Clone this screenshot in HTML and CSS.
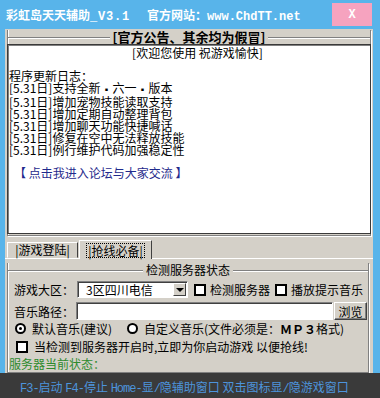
FILE: index.html
```html
<!DOCTYPE html>
<html lang="zh-CN">
<head>
    <meta charset="UTF-8">
    <title>彩虹岛天天辅助</title>
    <link rel="stylesheet" href="styles.css">
</head>
<body>
    <div class="window">
        <div class="titlebar">
            <span class="title">彩虹岛天天辅助<span class="ver">_V3.1</span></span>
            <span class="site">官方网站：<span class="url">www.ChdTT.net</span></span>
            <span class="close">X</span>
        </div>

        <div class="client">
            <div class="group notice">
                <div class="group-title"><span>[官方公告、其余均为假冒]</span></div>
                <div class="notice-box">
                    <div class="welcome">[欢迎您使用 祝游戏愉快]</div>
                    <div class="blank"></div>
                    <div>程序更新日志：</div>
                    <div>[5.31日]支持全新<span class="dot">▪</span>六一<span class="dot">▪</span>版本</div>
                    <div>[5.31日]增加宠物技能读取支持</div>
                    <div>[5.31日]增加定期自动整理背包</div>
                    <div>[5.31日]增加聊天功能快捷喊话</div>
                    <div>[5.31日]修复在空中无法释放技能</div>
                    <div>[5.31日]例行维护代码加强稳定性</div>
                    <div class="blank"></div>
                    <div class="forum">【 点击我进入论坛与大家交流 】</div>
                </div>
            </div>

            <div class="tabs">
                <span class="tab">|游戏登陆|</span>
                <span class="tab active"><span class="focus">|抢线必备|</span></span>
            </div>

            <div class="tab-panel">
                <div class="group server">
                    <div class="group-title"><span>检测服务器状态</span></div>

                    <div class="row row-zone">
                        <span class="label">游戏大区：</span>
                        <span class="select">
                            <span class="select-text">3区四川电信</span>
                            <span class="select-btn"><span class="arrow"></span></span>
                        </span>
                        <span class="check check-first"></span>
                        <span class="check-text">检测服务器</span>
                        <span class="check"></span>
                        <span class="check-text">播放提示音乐</span>
                    </div>

                    <div class="row row-path">
                        <span class="label">音乐路径：</span>
                        <span class="textbox"></span>
                        <span class="button">浏览</span>
                    </div>

                    <div class="row row-radio">
                        <span class="radio checked"></span>
                        <span class="radio-text first">默认音乐(建议)</span>
                        <span class="radio"></span>
                        <span class="radio-text">自定义音乐(文件必须是：<b>ＭＰ３</b>格式)</span>
                    </div>

                    <div class="row row-auto">
                        <span class="check"></span>
                        <span class="check-text">当检测到服务器开启时,立即为你启动游戏 以便抢线!</span>
                    </div>

                    <div class="row row-status">服务器当前状态：</div>
                </div>
            </div>
        </div>

        <div class="statusbar"><span class="en">F3-</span>启动 <span class="en">F4-</span>停止 <span class="en">Home-</span>显<span class="en">/</span>隐辅助窗口 双击图标显<span class="en">/</span>隐游戏窗口</div>
    </div>
</body>
</html>
```

FILE: styles.css
```css
body {
    margin: 0;
    font-family: "Noto Sans CJK SC", sans-serif;
    font-size: 12px;
    color: #000;
}

.window {
    width: 380px;
    height: 398px;
    background-color: #58b4ea;
    display: flex;
    flex-direction: column;
    overflow: hidden;
}

/* title bar */
.titlebar {
    height: 29px;
    display: flex;
    align-items: center;
    padding-left: 6px;
    color: #fff;
    font-weight: bold;
    font-size: 12px;
}

.ver,
.url {
    font-family: "Liberation Mono", monospace;
    font-weight: bold;
}

.ver {
    letter-spacing: 0.8px;
}

.site {
    margin-left: 17px;
}

.close {
    margin-left: auto;
    margin-right: 8px;
    width: 40px;
    height: 23px;
    background-color: #f6a3bf;
    display: flex;
    align-items: center;
    justify-content: center;
    font-family: "Liberation Mono", monospace;
    font-size: 12px;
}

/* gray client area */
.client {
    margin: 0 7px 0 5px;
    height: 344px;
    background-color: #d4d0c8;
    padding-top: 1px;
    box-sizing: border-box;
    overflow: hidden;
}

/* etched group box, the top edge is drawn by the title */
.group {
    border: 1px solid #808080;
    border-top: none;
    box-shadow: inset 1px 0 0 #fff, 1px 1px 0 #fff;
}

.group-title {
    display: flex;
    align-items: flex-end;
    height: 14px;
    line-height: 14px;
    margin: 0 -1px;
}

.group-title::before,
.group-title::after {
    content: "";
    flex: 1;
    height: 7px;
    box-sizing: border-box;
    border-top: 1px solid #808080;
    box-shadow: inset 0 1px 0 #fff;
}

.group-title::before {
    border-left: 1px solid #808080;
    box-shadow: inset 1px 1px 0 #fff;
}

.group-title::after {
    border-right: 1px solid #808080;
}

.group-title span {
    align-self: center;
    padding: 0 3px;
}

.notice {
    margin: 0 2px;
    padding-bottom: 1px;
}

.notice .group-title {
    font-size: 13px;
    font-weight: bold;
}

.notice-box {
    margin: 0 -1px;
    height: 190px;
    box-sizing: border-box;
    background-color: #fff;
    border: 1px solid #3a3a3a;
    box-shadow: inset 1px 1px 0 #808080;
    padding: 2px 0 0 1px;
    line-height: 12px;
}

.welcome {
    text-align: center;
    padding-left: 16px;
}

.blank {
    height: 11px;
}

.dot {
    display: inline-block;
    width: 12px;
    text-align: center;
    font-size: 9px;
}

.forum {
    color: #1f2a8c;
    padding-left: 5px;
}

/* tabs */
.tabs {
    display: flex;
    align-items: flex-end;
    height: 18px;
    margin-top: 4px;
    padding-left: 2px;
}

.tab {
    width: 71px;
    height: 16px;
    box-sizing: border-box;
    border: 1px solid;
    border-color: #fff #404040 transparent #fff;
    display: flex;
    align-items: center;
    justify-content: center;
    line-height: 14px;
}

.tab.active {
    width: 73px;
    height: 19px;
    margin-bottom: -1px;
    margin-left: 1px;
    background-color: #d4d0c8;
    border-bottom: none;
    position: relative;
}

.focus {
    border: 1px dotted #000;
    padding: 0 1px;
    line-height: 13px;
}

.tab-panel {
    border-top: 1px solid #fff;
}

.server {
    margin: 4px 4px 0 2px;
    padding: 0 0 3px 6px;
}

.server .group-title {
    margin-left: -7px;
}

/* form rows */
.row {
    display: flex;
    align-items: center;
    white-space: nowrap;
}

.label {
    width: 60px;
}

.row-zone {
    margin-top: 4px;
    height: 17px;
}

.select {
    margin-left: 3px;
    width: 111px;
    height: 17px;
    box-sizing: border-box;
    background-color: #fff;
    border: 1px solid;
    border-color: #808080 #fff #fff #808080;
    box-shadow: inset 1px 1px 0 #404040;
    display: flex;
    align-items: center;
}

.select-text {
    padding-left: 8px;
    flex: 1;
}

.select-btn {
    width: 13px;
    height: 13px;
    margin-right: 1px;
    box-sizing: border-box;
    background-color: #d4d0c8;
    border: 1px solid;
    border-color: #fff #404040 #404040 #fff;
    display: flex;
    align-items: center;
    justify-content: center;
}

.arrow {
    width: 0;
    height: 0;
    border-left: 4px solid transparent;
    border-right: 4px solid transparent;
    border-top: 4px solid #000;
}

.check {
    width: 12px;
    height: 12px;
    box-sizing: border-box;
    border: 2px solid #000;
    background-color: #fff;
    margin-left: 5px;
}

.check-first {
    margin-left: 6px;
}

.check-text {
    margin-left: 4px;
}

.row-path {
    margin-top: 4px;
    height: 18px;
}

.textbox {
    margin-left: 2px;
    width: 257px;
    height: 18px;
    box-sizing: border-box;
    background-color: #fff;
    border: 1px solid;
    border-color: #808080 #fff #fff #808080;
    box-shadow: inset 1px 1px 0 #404040;
}

.button {
    margin-left: 1px;
    width: 33px;
    height: 18px;
    box-sizing: border-box;
    border: 1px solid;
    border-color: #fff #404040 #404040 #fff;
    box-shadow: inset -1px -1px 0 #808080;
    display: flex;
    align-items: center;
    justify-content: center;
}

.row-radio {
    margin-top: 2px;
    height: 13px;
}

.radio {
    width: 11px;
    height: 11px;
    box-sizing: border-box;
    border: 2px solid #000;
    border-radius: 50%;
    background-color: #fff;
    display: flex;
    align-items: center;
    justify-content: center;
}

.row-radio .radio:first-child {
    margin-left: 1px;
}

.radio.checked::after {
    content: "";
    width: 3px;
    height: 3px;
    border-radius: 50%;
    background-color: #000;
}

.radio-text {
    margin-left: 6px;
}

.radio-text.first {
    width: 95px;
}

.row-auto {
    margin-top: 5px;
    height: 13px;
}

.row-auto .check {
    margin-left: 2px;
}

.row-auto .check-text {
    margin-left: 6px;
}

.row-status {
    margin-top: 4px;
    margin-left: -5px;
    height: 12px;
    color: #2e8b2e;
}

/* bottom bar */
.statusbar {
    height: 25px;
    background-color: #3a3a3a;
    color: #4d94dc;
    padding: 2px 0 0 20px;
    box-sizing: border-box;
    line-height: 23px;
    white-space: nowrap;
}

.en {
    font-family: "Liberation Mono", monospace;
    letter-spacing: -1px;
}
```
